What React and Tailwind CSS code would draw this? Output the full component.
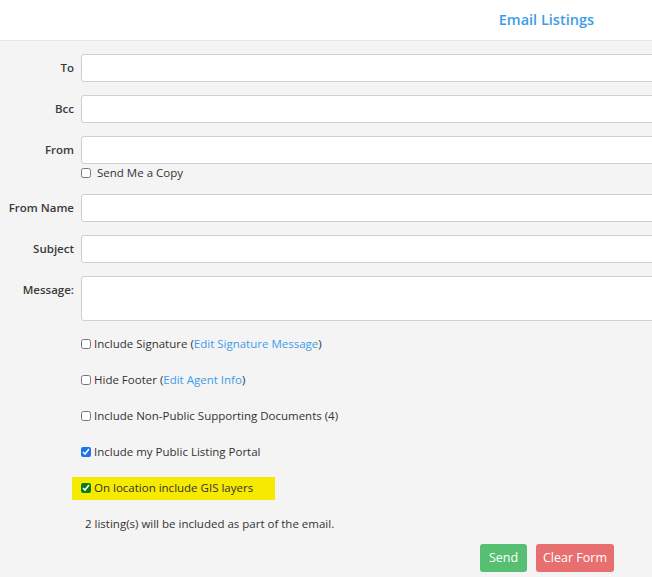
import React from 'react'

const font = { fontFamily: '"Open Sans", "Noto Sans", sans-serif' }

// Ligne de formulaire : label à droite + champ
const FieldRow = ({ label, tall = false, children }) => (
  <div className="flex">
    <label
      className={`w-[74px] shrink-0 text-right text-[11.5px] font-semibold text-[#3a3a3a] ${
        tall ? 'pt-[5px]' : 'leading-[28px]'
      }`}
    >
      {label}
    </label>
    <div className="ml-[7px] w-[600px] shrink-0">
      {tall ? (
        <textarea className="block w-full h-[45px] bg-white border border-[#cfcfd4] rounded-[3px] resize-none outline-none" />
      ) : (
        <input className="block w-full h-[28px] bg-white border border-[#cfcfd4] rounded-[3px] outline-none" />
      )}
      {children}
    </div>
  </div>
)

const CheckRow = ({ checked = false, highlight = false, children }) => (
  <div className="h-[36px] flex items-center pl-[72px]">
    <div
      className={`flex items-center h-[23px] pl-[9px] ${
        highlight ? 'bg-[#f6ea00] w-[203px]' : ''
      }`}
    >
      <input
        type="checkbox"
        defaultChecked={checked}
        className={`w-[10px] h-[10px] m-0 mr-[3px] ${highlight ? 'accent-[#0a7a12]' : 'accent-[#1a73e8]'}`}
      />
      <span className="text-[11.5px] text-[#333]">{children}</span>
    </div>
  </div>
)

export default function App() {
  return (
    <div className="w-[652px] h-[577px] overflow-hidden bg-[#f4f4f4]" style={font}>
      {/* En-tête */}
      <div className="h-[41px] bg-white border-b border-[#e6e6e6] flex items-center justify-end pr-[58px]">
        <h1 className="text-[14.5px] font-semibold text-[#3c9ce8]">Email Listings</h1>
      </div>

      <div className="pt-[13px] flex flex-col gap-[13px]">
        <FieldRow label="To" />
        <FieldRow label="Bcc" />
        <FieldRow label="From">
          <div className="flex items-center h-[17px]">
            <input type="checkbox" className="w-[10px] h-[10px] m-0 mr-[6px]" />
            <span className="text-[11.5px] text-[#333]">Send Me a Copy</span>
          </div>
        </FieldRow>
        <FieldRow label="From Name" />
        <FieldRow label="Subject" />
        <FieldRow label="Message:" tall />
      </div>

      <div className="pt-[5px]">
        <CheckRow>
          Include Signature (<span className="text-[#3c9ce8]">Edit Signature Message</span>)
        </CheckRow>
        <CheckRow>
          Hide Footer (<span className="text-[#3c9ce8]">Edit Agent Info</span>)
        </CheckRow>
        <CheckRow>Include Non-Public Supporting Documents (4)</CheckRow>
        <CheckRow checked>Include my Public Listing Portal</CheckRow>
        <CheckRow checked highlight>On location include GIS layers</CheckRow>
      </div>

      <p className="pl-[85px] mt-[9px] text-[11.5px] text-[#333]">
        2 listing(s) will be included as part of the email.
      </p>

      <div className="flex justify-end gap-[9px] pr-[38px] mt-[12px]">
        <button className="h-[28px] w-[47px] rounded-[3px] bg-[#56bf71] text-white text-[12.5px]">Send</button>
        <button className="h-[28px] w-[78px] rounded-[3px] bg-[#e76f6f] text-white text-[12.5px]">Clear Form</button>
      </div>
    </div>
  )
}
